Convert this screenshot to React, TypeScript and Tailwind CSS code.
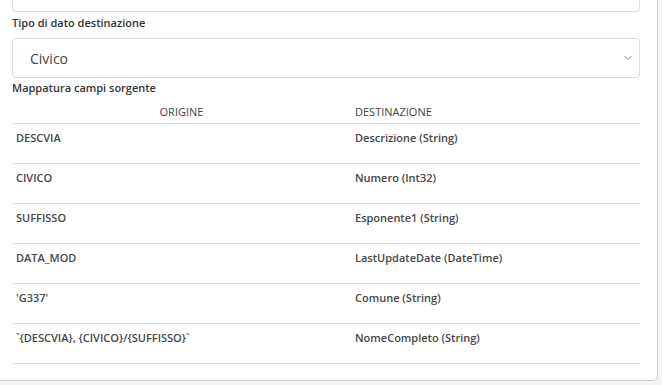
import { ChevronDown } from 'lucide-react';

const rows = [
  ['DESCVIA', 'Descrizione (String)'],
  ['CIVICO', 'Numero (Int32)'],
  ['SUFFISSO', 'Esponente1 (String)'],
  ['DATA_MOD', 'LastUpdateDate (DateTime)'],
  ["'G337'", 'Comune (String)'],
  ['`{DESCVIA}, {CIVICO}/{SUFFISSO}`', 'NomeCompleto (String)'],
];

export default function App() {
  return (
    <div className="h-[385px] w-[662px] overflow-hidden bg-[#f4f4f4] font-['Open_Sans',sans-serif] text-[#333]">
      {/* card */}
      <div className="w-[658px] h-[381px] bg-white border-r border-b border-[#c8c8c8] rounded-br-[5px] overflow-hidden">
        <div className="pl-3 pr-[17px]">
          <div className="-mt-[29px] h-[41px] rounded border border-[#dcdcdc] bg-white" />

          <div className="mt-[3px] text-[11px] font-semibold leading-[15px]">Tipo di dato destinazione</div>

          <div className="mt-[8px] h-[40px] rounded border border-[#dcdcdc] flex items-center justify-between pl-[17px] pr-[5px]">
            <span className="text-[14px] text-[#444]">Civico</span>
            <ChevronDown className="w-[12px] h-[12px] text-[#666]" strokeWidth={1.75} />
          </div>

          <div className="mt-[2px] text-[11px] font-semibold leading-[15px]">Mappatura campi sorgente</div>

          <div className="mt-[7px]">
            <div className="flex h-[22px] items-center border-b border-[#dedede] text-[11px] text-[#444]">
              <div className="w-[339px] text-center">ORIGINE</div>
              <div className="flex-1 pl-[4px]">DESTINAZIONE</div>
            </div>
            {rows.map(([a, b]) => (
              <div key={a} className="flex h-[40px] border-b border-[#dedede] text-[11px] font-semibold leading-[15px] text-[#474747]">
                <div className="w-[339px] pl-[4px] pt-[6px]">{a}</div>
                <div className="flex-1 pl-[4px] pt-[6px]">{b}</div>
              </div>
            ))}
          </div>
        </div>
      </div>
    </div>
  );
}
